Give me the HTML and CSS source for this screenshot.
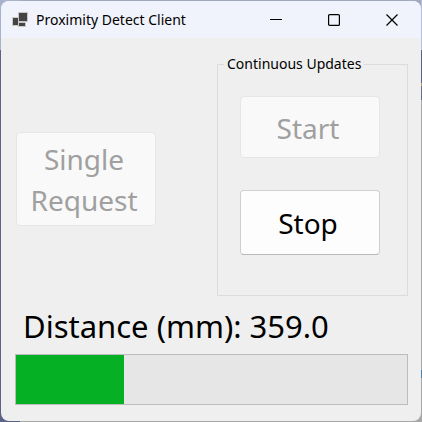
FILE: index.html
```html
<!DOCTYPE html>
<html lang="en">
<head>
<meta charset="utf-8">
<title>Proximity Detect Client</title>
<link rel="stylesheet" href="styles.css">
</head>
<body>
<div class="window">
  <header class="titlebar">
    <svg class="app-icon" viewBox="0 0 16 16" aria-hidden="true">
      <g fill="#444" stroke="#c9c7c5" stroke-width="1">
        <rect x="6.5" y="0.5" width="9" height="9"/>
        <rect x="0.5" y="5.5" width="6" height="8"/>
        <rect x="6.500" y="10.500" width="7" height="4"/>
      </g>
    </svg>
    <h1 class="title">Proximity Detect Client</h1>
    <div class="caption-buttons">
      <button class="caption" type="button" aria-label="Minimize"><svg viewBox="0 0 12 12"><path d="M0 5.5H12"/></svg></button>
      <button class="caption" type="button" aria-label="Maximize"><svg viewBox="0 0 12 12"><rect x="0.600" y="0.600" width="10.800" height="10.800" rx="1"/></svg></button>
      <button class="caption" type="button" aria-label="Close"><svg viewBox="0 0 12 12"><path d="M0.500 0.500L11.500 11.500M11.500 0.500L0.500 11.500"/></svg></button>
    </div>
  </header>
  <main class="client">
    <div class="actions">
      <button class="command single" type="button" disabled>Single Request</button>
      <fieldset class="group">
        <legend>Continuous Updates</legend>
        <button class="command start" type="button" disabled>Start</button>
        <button class="command stop" type="button">Stop</button>
      </fieldset>
    </div>
    <div class="reading">
      <label for="distance">Distance (mm):</label>
      <output>359.0</output>
    </div>
    <progress class="meter" id="distance" value="359" max="1300"></progress>
  </main>
</div>
</body>
</html>
```
FILE: styles.css
```css
* { box-sizing: border-box; }

html { height: 100%; }

body {
  margin: 0;
  min-height: 100%;
  padding: 1px;
  display: flex;
  font-family: "Segoe UI", "Noto Sans", "Open Sans", sans-serif;
  color: #000;
  background:
    linear-gradient(#b4bfe0 0 50px, #5b6285 50px 83px, #b0a070 83px 86px, #6b6f88 86px 100px, #a8a8a8 100px 370px, #4f81b0 370px 378px, #a8a8a8 378px) right / 1px 100% no-repeat,
    linear-gradient(#a9b2cd 0 50px, #5b6285 50px) left / 20px 100% no-repeat,
    linear-gradient(#a3a9bd 0 50%, #a8a8a8 50%);
}

.window {
  flex: 1;
  display: flex;
  flex-direction: column;
  overflow: hidden;
  border-radius: 8px;
  background: #efefef;
}

.titlebar {
  display: flex;
  align-items: center;
  height: 37px;
  padding-left: 11px;
  background: #f0f3fb;
}

.app-icon { width: 16px; height: 16px; }

.title {
  flex: 1;
  margin: 0 0 0 8px;
  font-size: 14px;
  line-height: 20px;
  font-weight: 400;
  white-space: nowrap;
}

.caption-buttons { display: flex; }

.caption {
  display: flex;
  align-items: center;
  justify-content: center;
  width: 58px;
  height: 36px;
  padding: 0;
  border: 0;
  background: none;
}

.caption svg {
  width: 12px;
  height: 12px;
  fill: none;
  stroke: #000;
  stroke-width: 1.200;
}

.client {
  flex: 1;
  padding: 16px 13px 16px 14px;
}

.actions {
  display: flex;
  justify-content: space-between;
  align-items: center;
}

.command {
  width: 140px;
  padding: 2px 10px 0 6px;
  border: 1px solid #d0d0d0;
  border-bottom-color: #b8b8b8;
  border-radius: 4px;
  background: #fdfdfd;
  color: #000;
  font-family: inherit;
  font-size: 28px;
  line-height: 41px;
}

.command:disabled {
  border-color: #e6e6e6;
  background: #f9f9f9;
  color: #a0a0a0;
}

.single {
  height: 94px;
  margin: 7px 0 0 1px;
}

.group {
  display: flex;
  flex-direction: column;
  align-items: flex-start;
  gap: 32px;
  width: 191px;
  margin: 0;
  padding: 22px 22px 40px;
  border: 1px solid #dcdcdc;
}

.group legend {
  margin-left: -16px;
  padding: 0 3px;
  font-size: 14px;
  line-height: 20px;
  white-space: nowrap;
}

.start { height: 62px; }
.stop { height: 65px; }

.reading {
  display: flex;
  gap: 8px;
  margin: 10px 0 8px 8px;
  font-size: 31px;
  line-height: 40px;
  white-space: nowrap;
}

.meter {
  display: block;
  width: 100%;
  height: 51px;
  appearance: none;
  border: 1px solid #bcbcbc;
  background: #e6e6e6;
}

.meter::-webkit-progress-bar { background: #e6e6e6; }
.meter::-webkit-progress-value { background: #06b025; }
```
